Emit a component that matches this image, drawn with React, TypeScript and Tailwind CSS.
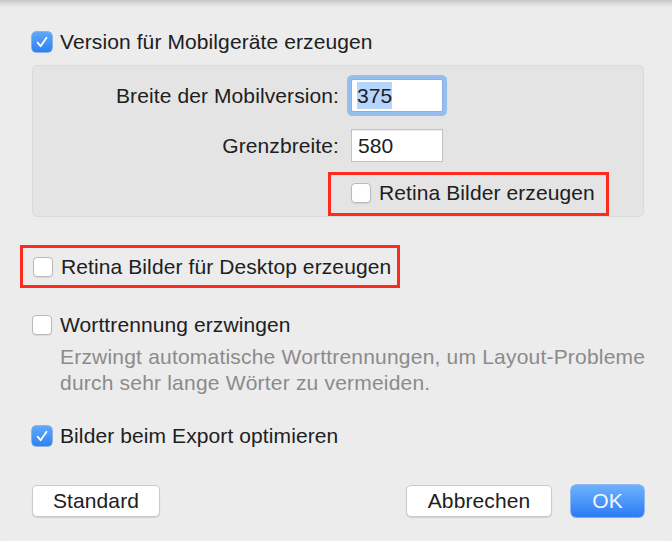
import React from 'react';

function Checkbox({ checked }: { checked?: boolean }) {
  if (checked) {
    return (
      <span className="flex h-5 w-5 shrink-0 items-center justify-center rounded-[4px] bg-linear-to-b from-[#5ea8fa] to-[#2f81f3] shadow-[0_0_0_0.5px_#2c78df]">
        <svg viewBox="0 0 20 20" className="h-5 w-5">
          <path d="M5.6 10.6l3 3.6 5.9-8.4" fill="none" stroke="#fff" strokeWidth={1.8} strokeLinecap="round" strokeLinejoin="round" />
        </svg>
      </span>
    );
  }
  return <span className="h-5 w-5 shrink-0 rounded-[4px] border border-[#b9b9b9] bg-white shadow-[0_1px_1px_rgba(0,0,0,0.08)]" />;
}

function CheckRow({ checked, label }: { checked?: boolean; label: string }) {
  return (
    <div className="flex h-5 items-center gap-2 leading-5 whitespace-nowrap">
      <Checkbox checked={checked} />
      <span>{label}</span>
    </div>
  );
}

function Button({ children, width, primary }: { children: React.ReactNode; width: string; primary?: boolean }) {
  return (
    <button
      className={
        primary
          ? `${width} flex h-[32px] items-center justify-center rounded-[5px] bg-linear-to-b from-[#6db1fc] to-[#2b7bf6] text-[#f2f7ff] shadow-[0_0_0_0.5px_#3d86ef,0_1px_1px_rgba(0,0,0,0.15)]`
          : `${width} flex h-[32px] items-center justify-center rounded-[5px] border border-[#cacaca] bg-white text-[#202020] shadow-[0_1px_1px_rgba(0,0,0,0.12)]`
      }
    >
      {children}
    </button>
  );
}

export default function App() {
  return (
    <div className="h-[541px] w-[672px] overflow-hidden bg-[#ececec] font-['Liberation_Sans',Arial,sans-serif] text-[21px] tracking-[0.1px] text-[#202020] shadow-[inset_0_8px_6px_-6px_rgba(0,0,0,0.22)]">
      <div className="flex flex-col pt-[32px] pr-[28px] pl-[32px]">
        <CheckRow checked label="Version für Mobilgeräte erzeugen" />

        {/* mobile settings panel */}
        <div className="mt-[13px] flex h-[152px] flex-col rounded-[5px] border border-[#dadada] bg-[#e4e4e4] pt-[13px]">
          <div className="flex h-[33px] items-center">
            <span className="w-[306px] text-right whitespace-nowrap">Breite der Mobilversion:</span>
            <div className="ml-[12px] flex h-[33px] w-[92px] items-center rounded-[2px] border border-[#86b1e6] bg-white pl-[5px] shadow-[0_0_0_4px_#95bdee]">
              <span className="flex h-[27px] items-center bg-[#b5d5fd]">375</span>
            </div>
          </div>
          <div className="mt-[17px] flex h-[33px] items-center">
            <span className="w-[306px] text-right whitespace-nowrap">Grenzbreite:</span>
            <div className="ml-[12px] flex h-[33px] w-[92px] items-center border border-[#c2c2c2] bg-white pl-[6px] shadow-[inset_0_1px_0_rgba(0,0,0,0.06)]">
              580
            </div>
          </div>
          <div className="mt-[10px] ml-[295px] flex h-[44px] w-[281px] items-start border-[3px] border-[#fd2a1e] pt-[8px] pl-[20px]">
            <CheckRow label="Retina Bilder erzeugen" />
          </div>
        </div>

        <div className="mt-[28px] -ml-[12px] flex h-[43px] w-[380px] items-start border-[3px] border-[#fd2a1e] pt-[9px] pl-[10px]">
          <CheckRow label="Retina Bilder für Desktop erzeugen" />
        </div>

        <div className="mt-[27px]">
          <CheckRow label="Worttrennung erzwingen" />
        </div>
        <p className="mt-[9px] pl-[28px] leading-[26px] tracking-[0.2px] whitespace-nowrap text-[#8b8b8b]">
          Erzwingt automatische Worttrennungen, um Layout-Probleme
          <br />
          durch sehr lange Wörter zu vermeiden.
        </p>

        <div className="mt-[30px]">
          <CheckRow checked label="Bilder beim Export optimieren" />
        </div>

        <div className="mt-[39px] flex items-center">
          <Button width="w-[128px]">Standard</Button>
          <div className="flex-1" />
          <Button width="w-[146px]">Abbrechen</Button>
          <div className="ml-[19px]">
            <Button width="w-[73px]" primary>
              OK
            </Button>
          </div>
        </div>
      </div>
    </div>
  );
}
